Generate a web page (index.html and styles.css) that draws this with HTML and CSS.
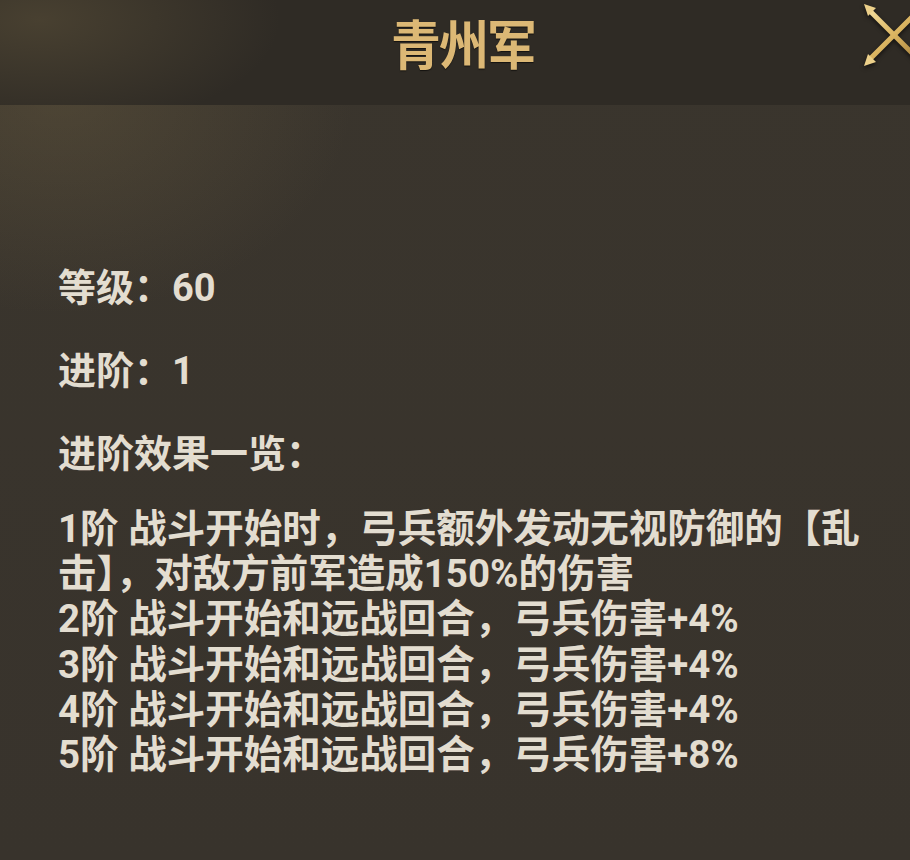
FILE: index.html
```html
<!DOCTYPE html>
<html lang="zh-CN">
<head>
    <meta charset="UTF-8">
    <meta name="viewport" content="width=device-width, initial-scale=1.0">
    <title>青州军</title>
    <link rel="stylesheet" href="styles.css">
</head>
<body>

    <div class="panel">
        <!-- Title bar -->
        <div class="header">
            <h1 class="title">青州军</h1>
            <button class="btn-close" aria-label="关闭">
                <svg viewBox="0 0 60 62" width="60" height="62">
                    <defs>
                        <linearGradient id="gold" x1="0" y1="0" x2="1" y2="1">
                            <stop offset="0" stop-color="#f3dc9a"/>
                            <stop offset="0.5" stop-color="#dab460"/>
                            <stop offset="1" stop-color="#a8823e"/>
                        </linearGradient>
                    </defs>
                    <g stroke="url(#gold)" stroke-width="5" stroke-linecap="round" fill="none">
                        <line x1="6" y1="7" x2="54" y2="55"/>
                        <line x1="6" y1="55" x2="54" y2="7"/>
                    </g>
                    <g fill="#ecd08a">
                        <polygon points="0,0 12,4 4,12"/>
                        <polygon points="0,62 4,50 12,58"/>
                    </g>
                </svg>
            </button>
        </div>

        <!-- Unit info -->
        <div class="content">
            <p class="stat">等级：60</p>
            <p class="stat">进阶：1</p>
            <p class="stat">进阶效果一览：</p>

            <ul class="effects">
                <li>1阶 战斗开始时，弓兵额外发动无视防御的【乱击】，对敌方前军造成150%的伤害</li>
                <li>2阶 战斗开始和远战回合，弓兵伤害+4%</li>
                <li>3阶 战斗开始和远战回合，弓兵伤害+4%</li>
                <li>4阶 战斗开始和远战回合，弓兵伤害+4%</li>
                <li>5阶 战斗开始和远战回合，弓兵伤害+8%</li>
            </ul>
        </div>
    </div>

</body>
</html>
```

FILE: styles.css
```css
/* General Styling */
* {
    box-sizing: border-box;
    margin: 0;
    padding: 0;
}

html, body {
    height: 100%;
}

body {
    font-family: Roboto, "Noto Sans CJK SC", sans-serif;
    background: #39342d;
    color: #e3ddd0;
    overflow: hidden;
}

.panel {
    position: relative;
    min-height: 100%;
    background:
        radial-gradient(ellipse 420px 320px at 60px 90px, rgba(120, 104, 70, 0.32), rgba(120, 104, 70, 0) 70%),
        linear-gradient(180deg, #3a352d 0%, #38332c 100%);
}

/* Title bar */
.header {
    position: relative;
    height: 105px;
    display: flex;
    justify-content: center;
    align-items: flex-start;
    padding: 12px 0 0 16px;
    background:
        radial-gradient(ellipse 300px 140px at 40px 20px, rgba(110, 96, 66, 0.4), rgba(110, 96, 66, 0) 80%),
        #2f2b25;
}

.title {
    font-family: "Noto Sans CJK SC", sans-serif;
    font-size: 50px;
    font-weight: 700;
    line-height: 60px;
    color: #dcb875;
    transform: scale(1, 1.06);
    letter-spacing: -2px;
    text-shadow: 0 1px 1px rgba(0, 0, 0, 0.6);
}

.btn-close {
    position: absolute;
    top: 4px;
    right: -14px;
    width: 60px;
    height: 62px;
    border: none;
    background: none;
    cursor: pointer;
    filter: drop-shadow(0 2px 2px rgba(0, 0, 0, 0.6));
}

.btn-close svg {
    display: block;
}

/* Info block */
.content {
    padding: 161px 24px 0 58px;
}

.stat {
    font-size: 38px;
    font-weight: 700;
    line-height: 44px;
    margin-bottom: 39px;
}

.effects {
    list-style: none;
    margin-top: -9px;
    font-size: 38.5px;
    font-weight: 700;
    line-height: 45.2px;
    max-width: 830px;
}
```
